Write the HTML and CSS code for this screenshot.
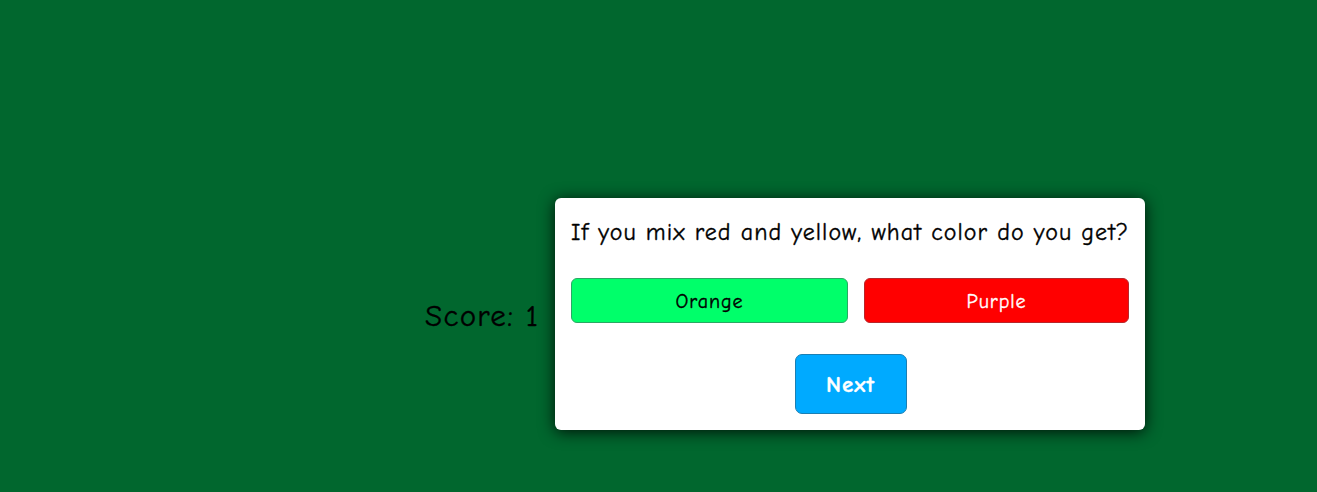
FILE: index.html
```html
<!DOCTYPE html>
<html lang="en">
<head>
<meta charset="utf-8">
<title>Quiz</title>
<link rel="stylesheet" href="styles.css">
</head>
<body>
<main class="stage">
  <div class="score">Score: 1</div>
  <section class="card">
    <h1 class="question">If you mix red and yellow, what color do you get?</h1>
    <div class="answers">
      <button class="answer answer-correct">Orange</button>
      <button class="answer answer-wrong">Purple</button>
    </div>
    <div class="actions">
      <button class="next">Next</button>
    </div>
  </section>
</main>
</body>
</html>
```
FILE: styles.css
```css
html, body {
  margin: 0;
  padding: 0;
}
body {
  background: #01672e;
  height: 492px;
  overflow: hidden;
  font-family: "Comic Sans MS", "Comic Neue", "Lato", sans-serif;
  color: #000;
  -webkit-text-stroke: 0.35px currentColor;
}
.stage {
  display: flex;
  align-items: center;
  gap: 15px;
  padding: 198px 0 0 425px;
}
.score {
  width: 115px;
  white-space: nowrap;
  font-size: 31px;
  letter-spacing: 1.3px;
  line-height: 36px;
  margin-top: 4px;
}
.card {
  box-sizing: border-box;
  width: 590px;
  padding: 16px;
  background: #fff;
  border-radius: 6px;
  box-shadow: 0 2px 16px rgba(0, 0, 0, 0.85);
}
.question {
  margin: 3px 0 0;
  font-weight: normal;
  font-size: 24px;
  letter-spacing: 1.05px;
  line-height: 30px;
  white-space: nowrap;
}
.answers {
  display: grid;
  grid-template-columns: 277px 265px;
  gap: 16px;
  margin-top: 31px;
}
.answer {
  height: 45px;
  padding-top: 3px;
  font-family: inherit;
  font-size: 20px;
  letter-spacing: 0.9px;
  border-radius: 6px;
  border: 1px solid;
  cursor: pointer;
}
.answer-correct {
  background: #00ff6a;
  border-color: #2aa864;
  color: #000;
}
.answer-wrong {
  background: #ff0000;
  border-color: #b8262a;
  color: #fff;
}
.actions {
  display: flex;
  justify-content: center;
  margin-top: 31px;
}
.next {
  width: 112px;
  height: 60px;
  padding-top: 2px;
  margin-left: 1px;
  background: #00aaff;
  border: 1px solid #1b7fb3;
  border-radius: 7px;
  color: #fff;
  font-family: inherit;
  font-weight: bold;
  font-size: 23px;
  letter-spacing: 1px;
}
```
